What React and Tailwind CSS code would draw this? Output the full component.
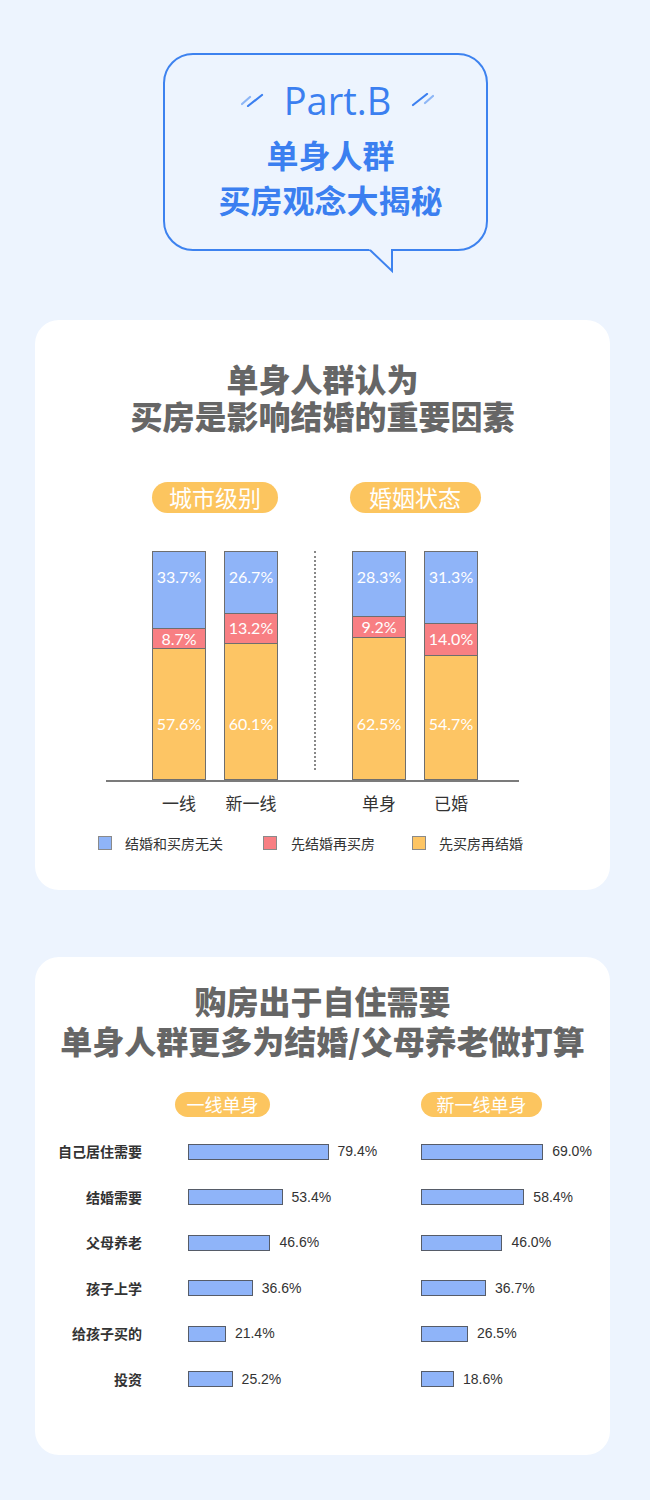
import React from "react"

const cityBars = [
    {name: "一线", blue: 33.7, red: 8.7, orange: 57.6},
    {name: "新一线", blue: 26.7, red: 13.2, orange: 60.1},
]

const marriageBars = [
    {name: "单身", blue: 28.3, red: 9.2, orange: 62.5},
    {name: "已婚", blue: 31.3, red: 14.0, orange: 54.7},
]

const reasons = [
    {label: "自己居住需要", a: 79.4, b: 69.0},
    {label: "结婚需要", a: 53.4, b: 58.4},
    {label: "父母养老", a: 46.6, b: 46.0},
    {label: "孩子上学", a: 36.6, b: 36.7},
    {label: "给孩子买的", a: 21.4, b: 26.5},
    {label: "投资", a: 25.2, b: 18.6},
]

const Slashes = ({flip}) => (
    <svg width="24" height="14" viewBox="0 0 24 14" className={flip ? "rotate-180" : ""}>
        <line x1="1" y1="11" x2="9" y2="4" stroke="#8db6f6" strokeWidth="2.2" strokeLinecap="round" />
        <line x1="7" y1="13" x2="21" y2="2" stroke="#3b7ff0" strokeWidth="2.2" strokeLinecap="round" />
    </svg>
)

const StackBar = ({blue, red, orange}) => (
    <div className="flex h-[229px] w-[54px] flex-col border-[1.5px] border-[#6e6e6e] font-['Lato',sans-serif] text-[16px] text-white">
        <div className="flex justify-center bg-[#8fb4f8] pt-[15px] leading-[20px]" style={{height: `${blue}%`}}>
            {blue.toFixed(1)}%
        </div>
        <div
            className="flex items-center justify-center border-t-[1.5px] border-[#6e6e6e] bg-[#f87f83] leading-[18px]"
            style={{height: `${red}%`}}
        >
            {red.toFixed(1)}%
        </div>
        <div className="flex flex-1 items-end justify-center border-t-[1.5px] border-[#6e6e6e] bg-[#fdc564] pb-[45px] leading-[20px]">
            {orange.toFixed(1)}%
        </div>
    </div>
)

const Group = ({title, bars, pillW}) => (
    <div className="flex w-[126px] flex-col items-center">
        <div
            className="flex h-[31px] shrink-0 items-center justify-center rounded-full bg-[#fcc55f] text-[23px] text-white"
            style={{width: pillW}}
        >
            {title}
        </div>
        <div className="mt-[38px] flex w-full justify-between">
            {bars.map((b) => (
                <StackBar key={b.name} {...b} />
            ))}
        </div>
    </div>
)

const Bar = ({v}) => (
    <div className="flex items-center">
        <div className="h-[16px] border border-[#565c68] bg-[#8fb4f9]" style={{width: `${v * 1.77}px`}} />
        <span className="ml-[9px] font-['Liberation_Sans',sans-serif] text-[14px] text-[#333]">{v.toFixed(1)}%</span>
    </div>
)

export default function App() {
    return (
        <div className="min-h-[1500px] overflow-hidden bg-[#edf4fe] pt-[53px] font-['Noto_Sans_CJK_SC',sans-serif]">
            {/* speech bubble */}
            <div className="relative ml-[163px] h-[198px] w-[325px] rounded-[30px] border-2 border-[#3d82ef]">
                <div className="flex flex-col items-center pl-[10px] pt-[25px] text-[#3b7ff0]">
                    <div className="ml-[14px] flex items-center gap-[19px]">
                        <Slashes />
                        <span className="font-['Open_Sans',sans-serif] text-[38px] font-medium leading-[40px]">Part.B</span>
                        <Slashes flip />
                    </div>
                    <div className="mt-[12px] flex flex-col items-center text-[32px] font-bold">
                        <div className="h-[45px] leading-[45px]">单身人群</div>
                        <div className="h-[45px] leading-[45px]">买房观念大揭秘</div>
                    </div>
                </div>
                <svg width="28" height="26" viewBox="0 0 28 26" className="absolute left-[203px] top-[194px]">
                    <polygon points="1,0 25,0 25,23" fill="#edf4fe" />
                    <polyline points="2,1 24,22 24,0" fill="none" stroke="#3d82ef" strokeWidth="2" />
                </svg>
            </div>

            {/* card 1 */}
            <div className="ml-[35px] mt-[69px] h-[570px] w-[575px] rounded-[24px] bg-white pt-[40px]">
                <h1 className="flex flex-col items-center text-[32px] font-black text-[#666]">
                    <span className="h-[37px] leading-[37px]">单身人群认为</span>
                    <span className="h-[37px] leading-[37px]">买房是影响结婚的重要因素</span>
                </h1>

                <div className="mt-[48px] flex items-end gap-[36px] pl-[117px]">
                    <Group title="城市级别" bars={cityBars} pillW="126px" />
                    <div className="mb-[10px] h-[219px] w-0 border-l-2 border-dotted border-[#888]" />
                    <Group title="婚姻状态" bars={marriageBars} pillW="131px" />
                </div>
                <div className="ml-[71px] h-[2px] w-[413px] bg-[#7b7b7b]" />

                <div className="mt-[9px] flex gap-[36px] pl-[117px] text-[17px] leading-[24px] text-[#333]">
                    <div className="flex w-[126px] justify-between">
                        {cityBars.map((b) => (
                            <span key={b.name} className="w-[54px] text-center whitespace-nowrap">
                                {b.name}
                            </span>
                        ))}
                    </div>
                    <div className="w-[2px]" />
                    <div className="flex w-[126px] justify-between">
                        {marriageBars.map((b) => (
                            <span key={b.name} className="w-[54px] text-center whitespace-nowrap">
                                {b.name}
                            </span>
                        ))}
                    </div>
                </div>

                {/* legend */}
                <div className="mt-[18px] flex pl-[63px] text-[14px] leading-[20px] text-[#333]">
                    <div className="flex w-[165px] items-center gap-[13px]">
                        <span className="h-[14px] w-[14px] border border-[#8a8a8a] bg-[#8fb4f8]" />
                        结婚和买房无关
                    </div>
                    <div className="flex w-[149px] items-center gap-[14px]">
                        <span className="h-[14px] w-[14px] border border-[#8a8a8a] bg-[#f87f83]" />
                        先结婚再买房
                    </div>
                    <div className="flex items-center gap-[13px]">
                        <span className="h-[14px] w-[14px] border border-[#8a8a8a] bg-[#fdc564]" />
                        先买房再结婚
                    </div>
                </div>
            </div>

            {/* card 2 */}
            <div className="ml-[35px] mt-[67px] h-[498px] w-[575px] rounded-[24px] bg-white pt-[23px]">
                <h1 className="flex flex-col items-center text-[32px] font-black text-[#666]">
                    <span className="h-[40px] leading-[40px]">购房出于自住需要</span>
                    <span className="h-[40px] leading-[40px]">单身人群更多为结婚/父母养老做打算</span>
                </h1>

                <div className="mt-[32px] flex pl-[140px] text-[18px] leading-[25px] text-white">
                    <div className="flex h-[25px] w-[95px] items-center justify-center rounded-full bg-[#fcc55f]">
                        一线单身
                    </div>
                    <div className="ml-[151px] flex h-[25px] w-[121px] items-center justify-center rounded-full bg-[#fcc55f]">
                        新一线单身
                    </div>
                </div>

                <div className="mt-[12px] flex flex-col">
                    {reasons.map((r) => (
                        <div key={r.label} className="flex h-[45.5px] items-center">
                            <div className="w-[107px] text-right text-[14px] font-bold text-[#333]">{r.label}</div>
                            <div className="ml-[46px] w-[233px]">
                                <Bar v={r.a} />
                            </div>
                            <Bar v={r.b} />
                        </div>
                    ))}
                </div>
            </div>
        </div>
    )
}
